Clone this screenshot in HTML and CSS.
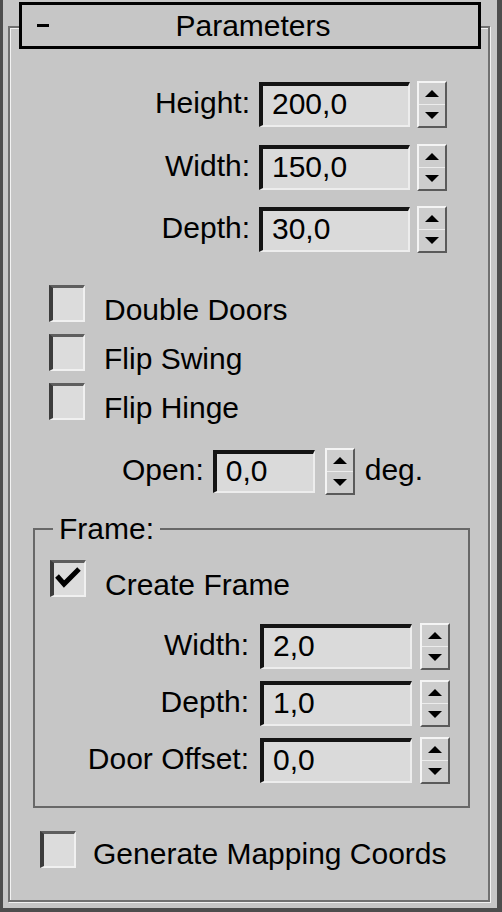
FILE: index.html
```html
<!DOCTYPE html>
<html>
<head>
<meta charset="utf-8">
<link rel="stylesheet" href="styles.css">
</head>
<body>
<div class="window">
  <div class="rollout">
    <div class="title">
      <span class="minus"></span>
      <span class="title-text">Parameters</span>
      <span></span>
    </div>

    <div class="spin-row r1">
      <span class="lbl">Height:</span>
      <div class="field">200,0</div>
      <div class="spinner"><span class="up"></span><span class="down"></span></div>
    </div>
    <div class="spin-row r2">
      <span class="lbl">Width:</span>
      <div class="field">150,0</div>
      <div class="spinner"><span class="up"></span><span class="down"></span></div>
    </div>
    <div class="spin-row r3">
      <span class="lbl">Depth:</span>
      <div class="field">30,0</div>
      <div class="spinner"><span class="up"></span><span class="down"></span></div>
    </div>

    <div class="check-row c1"><span class="box"></span><span class="clbl">Double Doors</span></div>
    <div class="check-row c2"><span class="box"></span><span class="clbl">Flip Swing</span></div>
    <div class="check-row c2"><span class="box"></span><span class="clbl">Flip Hinge</span></div>

    <div class="open-row">
      <span class="lbl">Open:</span>
      <div class="field small">0,0</div>
      <div class="spinner"><span class="up"></span><span class="down"></span></div>
      <span class="unit">deg.</span>
    </div>

    <fieldset class="group">
      <legend>Frame:</legend>
      <div class="check-row cf">
        <span class="box"><svg width="30" height="32" viewBox="0 0 30 32"><path d="M3 13 L10 21 L25 6" fill="none" stroke="#000" stroke-width="5"/></svg></span>
        <span class="clbl">Create Frame</span>
      </div>
      <div class="spin-row f1">
        <span class="lbl">Width:</span>
        <div class="field">2,0</div>
        <div class="spinner"><span class="up"></span><span class="down"></span></div>
      </div>
      <div class="spin-row f2">
        <span class="lbl">Depth:</span>
        <div class="field">1,0</div>
        <div class="spinner"><span class="up"></span><span class="down"></span></div>
      </div>
      <div class="spin-row f2">
        <span class="lbl">Door Offset:</span>
        <div class="field">0,0</div>
        <div class="spinner"><span class="up"></span><span class="down"></span></div>
      </div>
    </fieldset>

    <div class="check-row gen"><span class="box"></span><span class="clbl">Generate Mapping Coords</span></div>
  </div>
</div>
</body>
</html>
```

FILE: styles.css
```css
html, body {
  margin: 0;
  padding: 0;
  background: #c6c6c6;
}

.window {
  width: 502px;
  height: 912px;
  box-sizing: border-box;
  background: #c6c6c6;
  border-left: 3px solid #4d4d4d;
  border-right: 5px solid #4d4d4d;
  border-bottom: 4px solid #4d4d4d;
  padding: 26px 7px 0 5px;
  font-family: "Liberation Sans", Arial, sans-serif;
  font-size: 30px;
  color: #000;
}

.rollout {
  height: 876px;
  box-sizing: border-box;
  border: 2px solid #707070;
  box-shadow: 1px 1px 0 #f2f2f2, inset 1px 1px 0 #f2f2f2;
}

.title {
  margin: -26px 7px 0 9px;
  height: 47px;
  box-sizing: border-box;
  border: 3px solid #000;
  background: #c6c6c6;
  display: grid;
  grid-template-columns: 1fr auto 1fr;
  align-items: center;
  line-height: 41px;
}

.minus {
  justify-self: start;
  width: 12px;
  height: 3px;
  background: #000;
  margin-left: 15px;
}

.title-text {
  padding-left: 6px;
}

.spin-row {
  display: flex;
  justify-content: flex-end;
  align-items: center;
  height: 47px;
  padding-right: 41px;
}

.r1 { margin-top: 32px; }
.r2 { margin-top: 16px; }
.r3 { margin-top: 15px; }

.lbl {
  margin-right: 9px;
  margin-bottom: 4px;
  line-height: 38px;
}

.field {
  width: 151px;
  height: 45px;
  box-sizing: border-box;
  background: #dadada;
  border-style: solid;
  border-width: 4px 2px 2px 4px;
  border-color: #141414 #ededed #ededed #141414;
  padding-left: 9px;
  line-height: 35px;
}

.field.small {
  width: 102px;
  height: 43px;
  line-height: 33px;
}

.spinner {
  width: 30px;
  height: 47px;
  box-sizing: border-box;
  margin-left: 7px;
  border-style: solid;
  border-width: 2px;
  border-color: #f4f4f4 #5a5a5a #5a5a5a #f4f4f4;
  background: #cdcdcd;
  display: flex;
  flex-direction: column;
}

.spinner span {
  flex: 1;
  display: flex;
  align-items: center;
  justify-content: center;
}

.spinner .up {
  border-bottom: 1px solid #ececec;
}

.spinner .up::before {
  content: "";
  border-left: 7px solid transparent;
  border-right: 7px solid transparent;
  border-bottom: 7px solid #000;
}

.spinner .down::before {
  content: "";
  border-left: 7px solid transparent;
  border-right: 7px solid transparent;
  border-top: 7px solid #000;
}

.check-row {
  display: flex;
  align-items: flex-start;
  gap: 19px;
  margin-left: 39px;
}

.c1 { margin-top: 32px; }
.c2 { margin-top: 6px; }

.box {
  width: 36px;
  height: 37px;
  flex: none;
  box-sizing: border-box;
  border-style: solid;
  border-width: 3px 2px 2px 4px;
  border-color: #5e5e5e #f0f0f0 #f0f0f0 #3c3c3c;
  background: #dcdcdc;
  display: flex;
  align-items: center;
  justify-content: center;
}

.box svg {
  display: block;
}

.clbl {
  padding-top: 6px;
  line-height: 37px;
}

.open-row {
  display: flex;
  align-items: center;
  height: 47px;
  margin-top: 22px;
  padding-left: 112px;
}

.open-row .spinner {
  margin-left: 10px;
}

.unit {
  margin-left: 10px;
  margin-bottom: 4px;
  line-height: 38px;
}

.group {
  margin: 19px 18px 0 23px;
  padding: 0 18px 22px 15px;
  border: 2px solid #686868;
  min-width: 0;
}

.group legend {
  margin-left: 3px;
  padding: 0 6px;
  line-height: 30px;
}

.cf {
  margin-left: 0;
  margin-top: 16px;
}

.f1 { margin-top: 20px; padding-right: 0; }
.f2 { margin-top: 10px; padding-right: 0; }

.group .spin-row .lbl { margin-right: 11px; }
.group .spinner { margin-left: 8px; }
.group .field { width: 152px; }

.gen {
  margin-top: 23px;
  margin-left: 30px;
  gap: 17px;
}

.gen .clbl {
  padding-top: 4px;
}
```
